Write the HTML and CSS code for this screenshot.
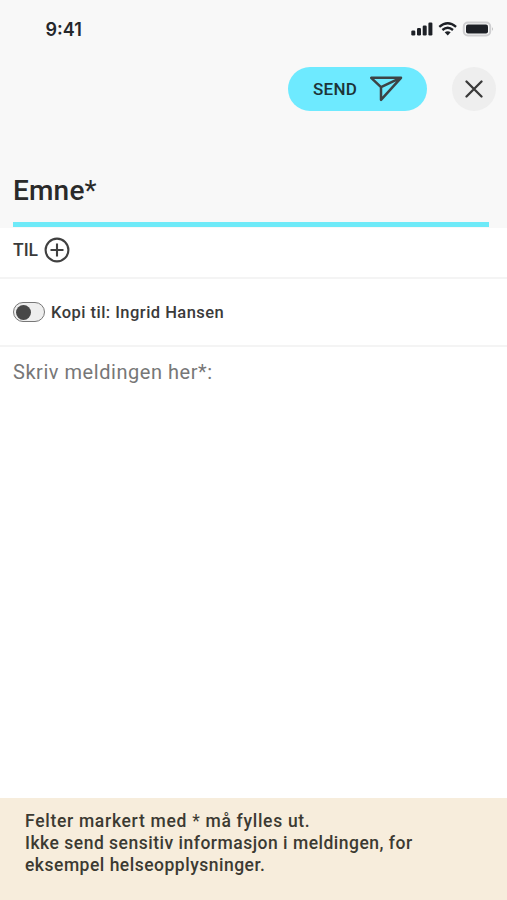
FILE: index.html
```
<!DOCTYPE html>
<html lang="no">
<head>
    <meta charset="UTF-8">
    <meta name="viewport" content="width=device-width, initial-scale=1.0">
    <title>Ny melding</title>
    <link rel="stylesheet" href="styles.css">
</head>
<body>
    <header class="top">
        <div class="status-bar">
            <span class="clock">9:41</span>
            <svg class="status-icons" width="84" height="20" viewBox="0 0 84 20">
                <g fill="#1d2026">
                    <rect x="1.3" y="11.5" width="4" height="5" rx="1.2"/>
                    <rect x="7" y="9" width="4" height="7.5" rx="1.2"/>
                    <rect x="12.7" y="6.5" width="4" height="10" rx="1.2"/>
                    <rect x="18.4" y="3.5" width="4" height="13" rx="1.2"/>
                    <path d="M34.7 13.3 Q37.7 11 40.7 13.3 L37.7 16.5 Z"/>
                    <rect x="56" y="5.5" width="22" height="9" rx="2"/>
                </g>
                <path d="M29.3 7.8 Q37.7 .8 46.1 7.8 M32.4 11 Q37.7 6.5 43 11" fill="none" stroke="#1d2026" stroke-width="2.3"/>
                <rect x="53.8" y="3.5" width="26.4" height="13" rx="4" fill="none" stroke="#cfcfd1" stroke-width="2"/>
                <path d="M82.3 8 Q83.8 10 82.3 12 Z" fill="#a5a5a7"/>
            </svg>
        </div>
        <div class="actions">
            <button class="send">
                <span>SEND</span>
                <svg width="34" height="28" viewBox="0 0 34 28" fill="none" stroke="#3d4345" stroke-width="2.5" stroke-linejoin="round">
                    <path d="M2.2 2.8 H32 L12 24.8 V12.2 Z M12 12.2 L31 3.2"/>
                </svg>
            </button>
            <button class="close" aria-label="Lukk">
                <svg width="18" height="18" viewBox="0 0 18 18" stroke="#3a3a3a" stroke-width="2.3" stroke-linecap="round">
                    <path d="M1.5 1.5 L16.5 16.5 M16.5 1.5 L1.5 16.5"/>
                </svg>
            </button>
        </div>
        <div class="subject">Emne<span class="required">*</span></div>
    </header>
    <main class="form">
        <div class="row recipients">
            <span>TIL</span>
            <svg width="26" height="26" viewBox="0 0 26 26" fill="none" stroke="#404040" stroke-width="2.1">
                <circle cx="13" cy="13" r="11.4"/>
                <path d="M13 6.5 V19.5 M6.5 13 H19.5"/>
            </svg>
        </div>
        <div class="row copy">
            <span class="toggle"></span>
            <span>Kopi til: Ingrid Hansen</span>
        </div>
        <div class="message">Skriv meldingen her*:</div>
    </main>
    <footer class="notice">
        <div class="line-1">Felter markert med <span class="required">*</span> må fylles ut.</div>
        <div class="line-2">Ikke send sensitiv informasjon i meldingen, for</div>
        <div class="line-3">eksempel helseopplysninger.</div>
    </footer>
</body>
</html>
```
FILE: styles.css
```
* {
    box-sizing: border-box;
}
body {
    display: flex;
    flex-direction: column;
    height: 100vh;
    margin: 0;
    background-color: #fff;
    color: #3a3a3a;
    font-family: Roboto, "Liberation Sans", sans-serif;
    font-weight: 500;
    white-space: nowrap;
}
svg {
    display: block;
    flex: none;
}
.top {
    height: 228px;
    background-color: #f8f8f8;
}
.status-bar {
    display: flex;
    justify-content: space-between;
    align-items: center;
    height: 58px;
    padding: 0 13px 0 45.5px;
}
.clock {
    font-family: Inter, sans-serif;
    font-size: 18px;
    font-weight: 600;
    color: #25272b;
}
.actions {
    display: flex;
    justify-content: flex-end;
    gap: 25px;
    height: 62px;
    padding: 9px 11px 0 0;
}
button {
    display: flex;
    align-items: center;
    border: 0;
    padding: 0;
    font: inherit;
}
.send {
    width: 139px;
    height: 44px;
    padding-left: 25px;
    gap: 12px;
    border-radius: 22px;
    background-color: #6eeaff;
    color: #1d3438;
    font-size: 17px;
    letter-spacing: 0.3px;
}
.close {
    justify-content: center;
    width: 44px;
    height: 44px;
    border-radius: 50%;
    background-color: #eee;
}
.subject {
    width: 476px;
    height: 107px;
    margin-left: 13px;
    padding-top: 53px;
    border-bottom: 5px solid #6eeaf8;
    color: #2a2a2a;
    font-size: 28px;
    line-height: 36px;
    letter-spacing: 0.2px;
}
.required {
    font-weight: 400;
}
.form {
    flex: 1;
}
.row {
    display: flex;
    align-items: center;
    padding-left: 13px;
    border-bottom: 2px solid #f4f4f4;
}
.recipients {
    height: 51px;
    padding-bottom: 5px;
    gap: 6px;
    font-size: 17.5px;
    line-height: 20px;
}
.copy {
    height: 68px;
    gap: 6px;
    font-size: 16.5px;
    letter-spacing: 0.47px;
}
.toggle {
    width: 32px;
    height: 20px;
    padding: 1.5px 2px;
    border: 1px solid #777;
    border-radius: 10px;
    background-color: #eee;
}
.toggle::before {
    content: "";
    display: block;
    width: 15px;
    height: 15px;
    border-radius: 50%;
    background-color: #484848;
}
.message {
    padding: 12px 13px;
    color: #777;
    font-size: 20px;
    font-weight: 400;
    line-height: 26px;
    letter-spacing: 0.54px;
}
.notice {
    height: 102px;
    padding: 12px 25px;
    background-color: #f7eddc;
    color: #3c3a32;
    font-size: 17.5px;
    line-height: 22px;
}
.line-1 {
    letter-spacing: 0.7px;
}
.line-2,
.line-3 {
    letter-spacing: 0.5px;
}
```
